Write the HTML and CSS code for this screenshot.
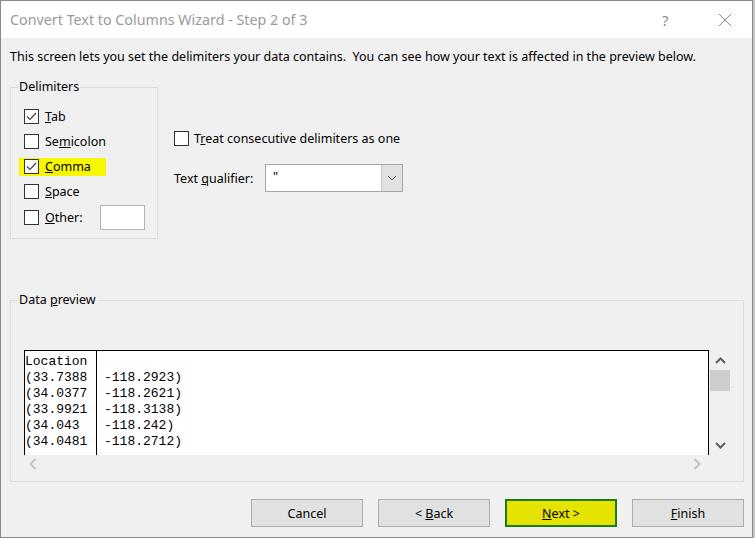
FILE: index.html
```html
<!DOCTYPE html>
<html>
<head>
<meta charset="utf-8">
<link rel="stylesheet" href="styles.css">
</head>
<body>
<div class="dialog">
  <div class="titlebar">
    <div class="title">Convert Text to Columns Wizard - Step 2 of 3</div>
    <div class="help">?</div>
    <svg class="close" width="14" height="14" viewBox="0 0 14 14"><path d="M1 1 L13 13 M13 1 L1 13" stroke="#8a8a8a" stroke-width="1" fill="none"/></svg>
  </div>
  <div class="content">
    <p class="intro">This screen lets you set the delimiters your data contains.&nbsp; You can see how your text is affected in the preview below.</p>
    <div class="top-row">
      <fieldset class="group delims">
        <legend>Delimiters</legend>
        <div class="row"><span class="opt"><span class="cb checked"><svg width="13" height="13" viewBox="0 0 13 13"><path d="M2 6.5 L5 9.5 L11 3" stroke="#444" stroke-width="1.2" fill="none"/></svg></span><span><u>T</u>ab</span></span></div>
        <div class="row"><span class="opt"><span class="cb"></span><span>Se<u>m</u>icolon</span></span></div>
        <div class="row"><span class="opt hl"><span class="cb checked"><svg width="13" height="13" viewBox="0 0 13 13"><path d="M2 6.5 L5 9.5 L11 3" stroke="#444" stroke-width="1.2" fill="none"/></svg></span><span><u>C</u>omma</span></span></div>
        <div class="row"><span class="opt"><span class="cb"></span><span><u>S</u>pace</span></span></div>
        <div class="row other"><span class="opt"><span class="cb"></span><span><u>O</u>ther:</span></span><span class="textbox"></span></div>
      </fieldset>
      <div class="options">
        <div class="treat"><span class="cb"></span><span>T<u>r</u>eat consecutive delimiters as one</span></div>
        <div class="qualifier">
          <span class="qlabel">Text <u>q</u>ualifier:</span>
          <span class="combo"><span class="combo-val">"</span><span class="combo-btn"><svg width="10" height="6" viewBox="0 0 10 6"><path d="M1 1 L5 5 L9 1" stroke="#606060" stroke-width="1" fill="none"/></svg></span></span>
        </div>
      </div>
    </div>
    <fieldset class="group preview">
      <legend>Data <u>p</u>review</legend>
      <div class="pane-wrap">
        <div class="pane-main">
          <div class="pane">
            <div class="col c1">
              <div>Location</div>
              <div>(33.7388</div>
              <div>(34.0377</div>
              <div>(33.9921</div>
              <div>(34.043</div>
              <div>(34.0481</div>
            </div>
            <div class="col c2">
              <div>&nbsp;</div>
              <div>-118.2923)</div>
              <div>-118.2621)</div>
              <div>-118.3138)</div>
              <div>-118.242)</div>
              <div>-118.2712)</div>
            </div>
          </div>
          <div class="hscroll">
            <svg width="8" height="12" viewBox="0 0 8 12"><path d="M6.5 1 L1.5 6 L6.5 11" stroke="#c2c2c2" stroke-width="2" fill="none"/></svg>
            <svg width="8" height="12" viewBox="0 0 8 12"><path d="M1.5 1 L6.5 6 L1.5 11" stroke="#c2c2c2" stroke-width="2" fill="none"/></svg>
          </div>
        </div>
        <div class="vscroll">
          <div class="arrow"><svg width="11" height="7" viewBox="0 0 11 7"><path d="M1 6 L5.5 1.5 L10 6" stroke="#606060" stroke-width="2" fill="none"/></svg></div>
          <div class="thumb"></div>
          <div class="spacer"></div>
          <div class="arrow"><svg width="11" height="7" viewBox="0 0 11 7"><path d="M1 1 L5.5 5.5 L10 1" stroke="#606060" stroke-width="2" fill="none"/></svg></div>
        </div>
      </div>
    </fieldset>
    <div class="buttons">
      <button class="btn">Cancel</button>
      <button class="btn">&lt; <u>B</u>ack</button>
      <button class="btn primary"><u>N</u>ext &gt;</button>
      <button class="btn"><u>F</u>inish</button>
    </div>
  </div>
</div>
</body>
</html>
```
FILE: styles.css
```css
html, body {
  margin: 0;
  padding: 0;
  background: #c8c8c8;
}
body {
  font-family: "Noto Sans", "Open Sans", sans-serif;
  font-size: 12.5px;
  color: #000;
}
.dialog {
  width: 753px;
  height: 538px;
  box-sizing: border-box;
  border: 1px solid #8a8a8a;
  background: #f0f0f0;
  overflow: hidden;
}
.titlebar {
  height: 37px;
  background: #fff;
  display: flex;
  align-items: center;
}
.title {
  flex: 1;
  padding-left: 9px;
  font-size: 14.3px;
  color: #9a9a9a;
  line-height: 20px;
}
.help {
  font-size: 15px;
  color: #8a8a8a;
  width: 20px;
  margin-right: 36px;
}
.close {
  margin-right: 20px;
}
.content {
  padding: 0 8px 0 9px;
}
.intro {
  margin: 11px 0 0 0;
  line-height: 16px;
  white-space: nowrap;
}
.top-row {
  display: flex;
  align-items: flex-start;
  margin-top: 14px;
}
.group {
  margin: 0;
  border: 1px solid #dcdcdc;
  padding: 0;
  min-width: 0;
}
.group legend {
  margin-left: 7px;
  padding: 0 1px;
  line-height: 16px;
}
.delims {
  width: 148px;
  box-sizing: border-box;
  padding: 9px 0 8px 0;
}
.row {
  height: 25px;
  display: flex;
  align-items: center;
  margin-left: 8px;
}
.opt {
  display: inline-flex;
  align-items: center;
  height: 18px;
  padding-left: 5px;
  width: 82px;
  gap: 6px;
}
.opt.hl {
  background: #f7f700;
}
.cb {
  width: 15px;
  height: 15px;
  box-sizing: border-box;
  border: 1px solid #333;
  background: #fff;
  display: inline-flex;
  align-items: center;
  justify-content: center;
  flex: none;
}
.other {
  height: 25px;
  margin-top: 1px;
}
.other .opt {
  width: 76px;
}
.textbox {
  width: 45px;
  height: 25px;
  box-sizing: border-box;
  border: 1px solid #b4b4b4;
  background: #fff;
}
.options {
  margin-left: 16px;
  padding-top: 51px;
}
.treat {
  display: flex;
  align-items: center;
  gap: 5px;
  height: 16px;
}
.qualifier {
  display: flex;
  align-items: center;
  margin-top: 18px;
}
.qlabel {
  width: 91px;
}
.combo {
  width: 138px;
  height: 28px;
  box-sizing: border-box;
  border: 1px solid #a6a6a6;
  background: #fff;
  display: flex;
}
.combo-val {
  flex: 1;
  padding-left: 7px;
  line-height: 24px;
}
.combo-btn {
  width: 20px;
  background: #e1e1e1;
  border-left: 1px solid #c8c8c8;
  display: flex;
  align-items: center;
  justify-content: center;
}
.preview {
  margin-top: 53px;
  width: 734px;
  box-sizing: border-box;
  padding: 42px 13px 9px 0;
}
.pane-wrap {
  display: flex;
  margin-left: 13px;
}
.pane-main {
  width: 686px;
}
.pane {
  height: 105px;
  box-sizing: border-box;
  border: 1px solid #000;
  border-bottom: none;
  background: #fff;
  display: flex;
  overflow: hidden;
  font-family: "Liberation Mono", "Courier New", monospace;
  font-size: 13px;
  line-height: 16px;
  color: #000;
}
.col {
  padding-top: 3px;
  white-space: nowrap;
}
.c1 {
  width: 71px;
  border-right: 1px solid #000;
}
.c2 {
  padding-left: 7px;
}
.hscroll {
  height: 17px;
  display: flex;
  align-items: center;
  justify-content: space-between;
  padding: 0 8px 0 5px;
}
.vscroll {
  width: 20px;
  height: 105px;
  display: flex;
  flex-direction: column;
  margin-left: 1px;
}
.vscroll .arrow {
  height: 20px;
  display: flex;
  align-items: center;
  justify-content: center;
}
.thumb {
  height: 21px;
  background: #cdcdcd;
}
.spacer {
  flex: 1;
}
.buttons {
  display: flex;
  justify-content: flex-end;
  gap: 15px;
  margin-top: 17px;
}
.btn {
  width: 112px;
  height: 28px;
  box-sizing: border-box;
  border: 1px solid #adadad;
  background: #e1e1e1;
  font-family: "Noto Sans", "Open Sans", sans-serif;
  font-size: 12.5px;
  color: #000;
  padding: 0;
}
.btn.primary {
  background: #e4e400;
  border: 2px solid #1c7c1c;
}
```
